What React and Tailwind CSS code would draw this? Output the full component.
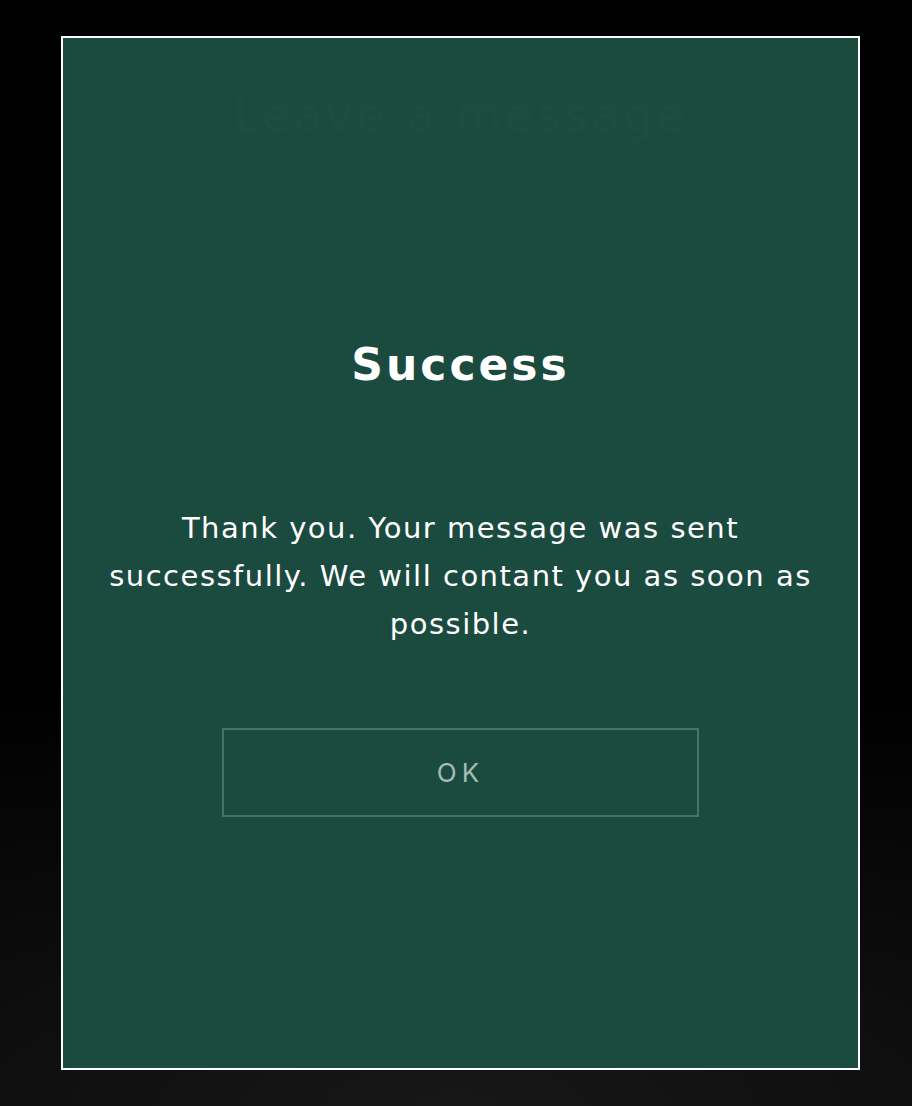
import React from 'react';

const App = () => {
    return (
        <div className="min-h-screen w-full bg-[radial-gradient(ellipse_150%_40%_at_50%_100%,#171717_0%,#0c0c0c_45%,#000000_100%)] pt-[36px] pl-[61px] pb-[36px]">
            <div className="flex h-[1034px] w-[799px] flex-col items-center border-2 border-white bg-[#1b4a3f] px-[20px]" style={{ fontFamily: '"DejaVu Sans", sans-serif' }}>
                {/* faded title behind the dialog */}
                <h2 className="mt-[49px] text-[47px] leading-[56px] tracking-[3px] text-[#1f4c42]">Leave a message</h2>

                <h1 className="mt-[194px] text-[44px] font-semibold leading-[56px] tracking-[3px] text-white">Success</h1>

                <p className="mt-[111px] text-center text-[29px] leading-[48px] tracking-[1.5px] text-white">
                    Thank you. Your message was sent<br />
                    successfully. We will contant you as soon as<br />
                    possible.
                </p>

                <button className="mt-[80px] flex h-[89px] w-[477px] items-center justify-center border-2 border-[#477366] text-[26px] tracking-[5px] text-[#a3bcb5]" style={{ fontFamily: 'Inter, sans-serif' }}>
                    OK
                </button>
            </div>
        </div>
    );
};

export default App;
